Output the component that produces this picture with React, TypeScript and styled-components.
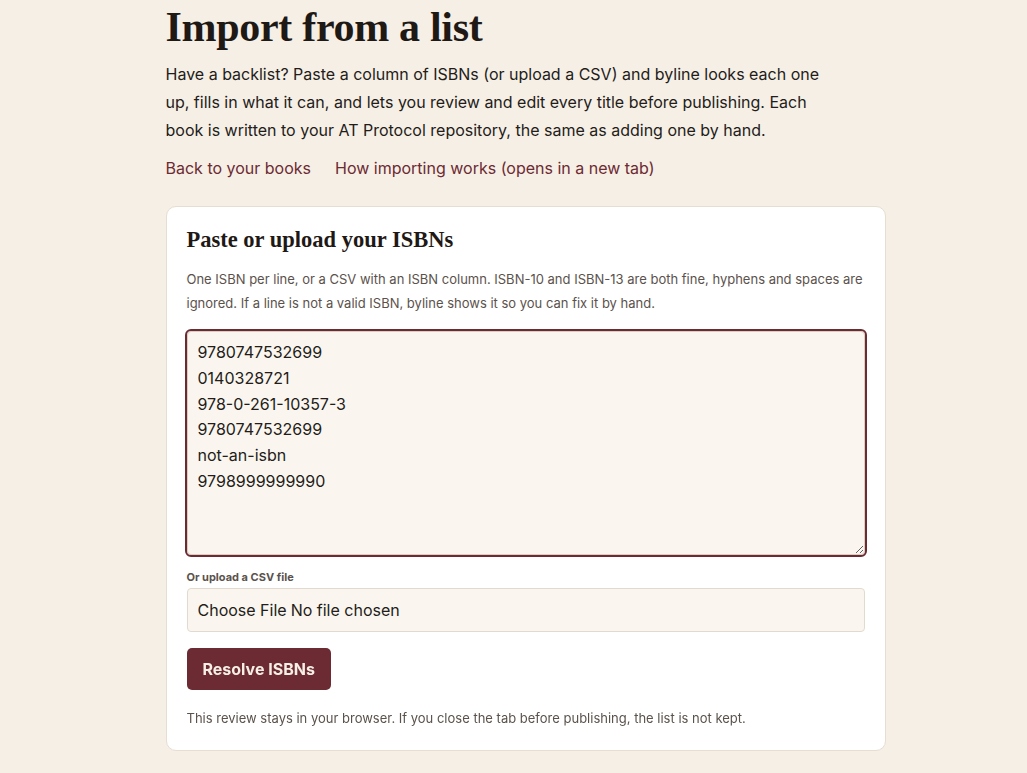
import { useEffect, useRef } from 'react'
import styled, { createGlobalStyle } from 'styled-components'

const maroon = '#6c2a32'

const GlobalStyle = createGlobalStyle`
    body {
        margin: 0;
        background: #f6efe6;
        font-family: Inter, 'Noto Sans', sans-serif;
        color: #231c19;
    }
`

const Page = styled.main`
    width: 720px;
    margin: 0 auto;
    padding: 0 0 40px;
    transform: translateX(12px);
`

const Title = styled.h1`
    font-family: 'Liberation Serif', 'DejaVu Serif', serif;
    font-weight: 700;
    font-size: 42px;
    line-height: 1;
    letter-spacing: -0.3px;
    margin: 6px 0 12px;
    color: #1f1916;
`

const Intro = styled.p`
    font-size: 16px;
    line-height: 28px;
    max-width: 670px;
    margin: 0 0 10px;
`

const LinkRow = styled.nav`
    display: flex;
    gap: 24px;
    margin-bottom: 24px;
`

const NavLink = styled.a`
    color: ${maroon};
    font-size: 16px;
    line-height: 28px;
    text-decoration: none;
`

const Card = styled.section`
    background: #fff;
    border: 1px solid #e7ddd1;
    border-radius: 10px;
    padding: 18px 20px 22px;
`

const CardTitle = styled.h2`
    font-family: 'Liberation Serif', 'DejaVu Serif', serif;
    font-weight: 700;
    font-size: 22.5px;
    line-height: 30px;
    margin: 0 0 12px;
    color: #1f1916;
`

const Hint = styled.p`
    font-size: 13px;
    line-height: 24px;
    color: #5b524c;
    margin: 0 0 16px;
`

const IsbnArea = styled.textarea`
    display: block;
    box-sizing: border-box;
    width: 100%;
    height: 224px;
    padding: 8px 10px;
    border: 1px solid #d8cec2;
    border-radius: 4px;
    outline: 2px solid ${maroon};
    background: #faf6ef;
    font-family: Inter, 'Noto Sans', sans-serif;
    font-size: 16px;
    line-height: 25.8px;
    color: #231c19;
    caret-color: #231c19;
`

const FieldLabel = styled.label`
    display: block;
    margin: 15px 0 4px;
    font-size: 11px;
    font-weight: 700;
    color: #5b524c;
`

const FileInput = styled.input`
    display: block;
    box-sizing: border-box;
    width: 100%;
    height: 44px;
    padding: 0 10px;
    border: 1px solid #e3dacf;
    border-radius: 4px;
    background: #faf6ef;
    font-family: Inter, 'Noto Sans', sans-serif;
    font-size: 16px;
    color: #231c19;

    &::file-selector-button {
        border: none;
        background: none;
        padding: 0 4px 0 0;
        margin: 0;
        font: inherit;
        color: inherit;
        height: 42px;
    }
`

const ResolveButton = styled.button`
    margin-top: 16px;
    height: 42px;
    padding: 0 16px;
    border: none;
    border-radius: 5px;
    background: ${maroon};
    color: #f6efe6;
    font-family: Inter, 'Noto Sans', sans-serif;
    font-weight: 700;
    font-size: 16px;
    cursor: pointer;
`

const Footnote = styled.p`
    font-size: 13px;
    line-height: 20px;
    color: #5b524c;
    margin: 18px 0 0;
`

const isbns = [
    '9780747532699',
    '0140328721',
    '978-0-261-10357-3',
    '9780747532699',
    'not-an-isbn',
    '9798999999990',
].join('\n')

export default function App() {
    const areaRef = useRef<HTMLTextAreaElement>(null)

    useEffect(() => {
        const el = areaRef.current
        if (!el) return
        el.focus()
        el.setSelectionRange(isbns.length, isbns.length)
    }, [])

    return (
        <>
            <GlobalStyle />
            <Page>
                <Title>Import from a list</Title>
                <Intro>
                    Have a backlist? Paste a column of ISBNs (or upload a CSV) and byline looks each one
                    up, fills in what it can, and lets you review and edit every title before publishing.
                    Each book is written to your AT Protocol repository, the same as adding one by hand.
                </Intro>
                <LinkRow>
                    <NavLink href="#">Back to your books</NavLink>
                    <NavLink href="#">How importing works (opens in a new tab)</NavLink>
                </LinkRow>
                <Card>
                    <CardTitle>Paste or upload your ISBNs</CardTitle>
                    <Hint>
                        One ISBN per line, or a CSV with an ISBN column. ISBN-10 and ISBN-13 are both fine,
                        hyphens and spaces are ignored. If a line is not a valid ISBN, byline shows it so you
                        can fix it by hand.
                    </Hint>
                    <IsbnArea ref={areaRef} defaultValue={isbns} spellCheck={false} />
                    <FieldLabel htmlFor="csv">Or upload a CSV file</FieldLabel>
                    <FileInput id="csv" type="file" accept=".csv" />
                    <ResolveButton type="button">Resolve ISBNs</ResolveButton>
                    <Footnote>
                        This review stays in your browser. If you close the tab before publishing, the list
                        is not kept.
                    </Footnote>
                </Card>
            </Page>
        </>
    )
}
